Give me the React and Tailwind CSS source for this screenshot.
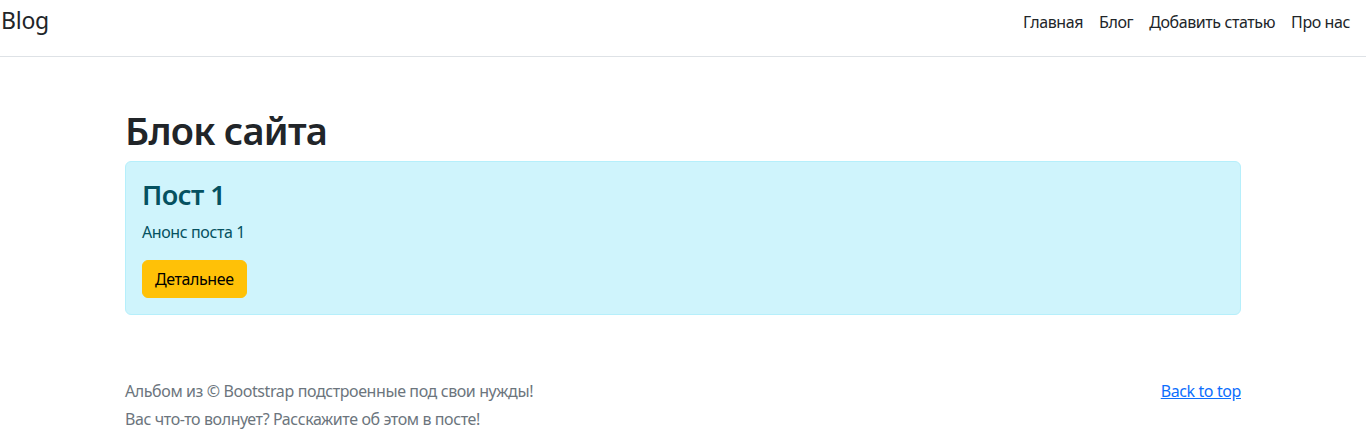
export default function App() {
  const font = { fontFamily: '"Noto Sans", "Open Sans", sans-serif' };
  return (
    <div className="min-h-screen bg-white text-[#212529] text-[16px] leading-[1.5] tracking-[-0.025em]" style={font}>
      <header className="h-[57px] border-b border-[#dee2e6] flex items-start justify-between pr-2 pt-[2px]">
        <a className="text-[23px] leading-[36px] text-[#212529] pl-[1px] tracking-[-0.01em]">Blog</a>
        <nav className="flex">
          {["Главная", "Блог", "Добавить статью", "Про нас"].map((t) => (
            <a key={t} className="px-2 py-2 text-[#212529] text-[16px] leading-6">{t}</a>
          ))}
        </nav>
      </header>
      <main className="pt-12">
        <div className="w-[1116px] mx-auto">
          <h1 className="text-[38px] leading-[50px] font-semibold tracking-[-0.02em] mb-[6px]">Блок сайта</h1>
          <div className="bg-[#cff4fc] border border-[#b6effb] rounded-[6px] p-4 mb-4 text-[#055160]">
            <h3 className="text-[27px] leading-[34px] font-semibold tracking-[-0.02em] mb-2">Пост 1</h3>
            <p className="mb-4">Анонс поста 1</p>
            <button className="bg-[#ffc107] border border-[#ffc107] rounded-[6px] px-3 py-[6px] text-[#000] leading-6 tracking-[-0.025em]">Детальнее</button>
          </div>
        </div>
      </main>
      <footer className="py-12 text-[#6c757d]">
        <div className="w-[1116px] mx-auto">
          <div className="flex justify-between mb-1">
            <p>Альбом из © Bootstrap подстроенные под свои нужды!</p>
            <a className="text-[#0d6efd] underline">Back to top</a>
          </div>
          <p className="mb-1">Вас что-то волнует? Расскажите об этом в посте!</p>
        </div>
      </footer>
    </div>
  );
}
